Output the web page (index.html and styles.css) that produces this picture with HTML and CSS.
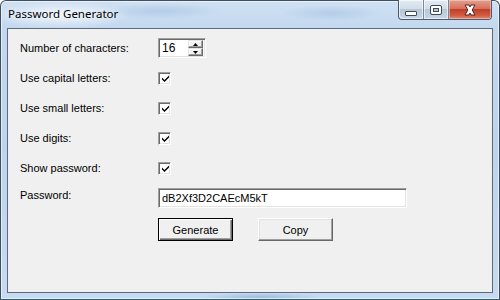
FILE: index.html
```html
<!DOCTYPE html>
<html>
<head>
<meta charset="utf-8">
<link rel="stylesheet" href="styles.css">
</head>
<body>
<div class="window">
  <div class="titlebar">
    <span class="title">Password Generator</span>
    <div class="caption-btns">
      <div class="cbtn cmin"><span class="min-icon"></span></div>
      <div class="cbtn cmax"><span class="max-icon"></span></div>
      <div class="cbtn cclose">
        <svg width="20" height="12" viewBox="0 0 20 12">
          <path d="M5 1 L9 1 L10 3 L11 1 L15 1 L12.2 6 L15 11 L11 11 L10 9 L9 11 L5 11 L7.8 6 Z" fill="#fff" stroke="#5a2020" stroke-width="1" stroke-linejoin="round"/>
        </svg>
      </div>
    </div>
  </div>
  <div class="client">
    <div class="form">
      <span class="label">Number of characters:</span>
      <div class="spinner">
        <span class="spin-val">16</span>
        <div class="spin-btns">
          <div class="spin-btn"><svg width="5" height="3" viewBox="0 0 5 3"><path d="M2.5 0 L5 3 L0 3 Z" fill="#000"/></svg></div>
          <div class="spin-btn"><svg width="5" height="3" viewBox="0 0 5 3"><path d="M0 0 L5 0 L2.5 3 Z" fill="#000"/></svg></div>
        </div>
      </div>

      <span class="label">Use capital letters:</span>
      <div class="check"><svg width="9" height="9" viewBox="0 0 9 9"><path d="M1 3.5 L3.5 6 L8 1.5 L8 3.5 L3.5 8 L1 5.5 Z" fill="#000"/></svg></div>

      <span class="label">Use small letters:</span>
      <div class="check"><svg width="9" height="9" viewBox="0 0 9 9"><path d="M1 3.5 L3.5 6 L8 1.5 L8 3.5 L3.5 8 L1 5.5 Z" fill="#000"/></svg></div>

      <span class="label">Use digits:</span>
      <div class="check"><svg width="9" height="9" viewBox="0 0 9 9"><path d="M1 3.5 L3.5 6 L8 1.5 L8 3.5 L3.5 8 L1 5.5 Z" fill="#000"/></svg></div>

      <span class="label">Show password:</span>
      <div class="check"><svg width="9" height="9" viewBox="0 0 9 9"><path d="M1 3.5 L3.5 6 L8 1.5 L8 3.5 L3.5 8 L1 5.5 Z" fill="#000"/></svg></div>

      <span class="label label-top">Password:</span>
      <div class="textbox">dB2Xf3D2CAEcM5kT</div>

      <div class="buttons">
        <div class="btn btn-default">Generate</div>
        <div class="btn">Copy</div>
      </div>
    </div>
  </div>
</div>
</body>
</html>
```

FILE: styles.css
```css
html, body {
  margin: 0;
  padding: 0;
  width: 500px;
  height: 300px;
  overflow: hidden;
  background: #fff;
}

.window {
  box-sizing: border-box;
  width: 500px;
  height: 300px;
  border: 1px solid #3f4f60;
  border-bottom-color: #2f6070;
  border-radius: 6px 6px 0 0;
  padding: 0 6px 6px 6px;
  display: flex;
  flex-direction: column;
  background:
    radial-gradient(ellipse 70px 14px at 60px 14px, rgba(255,255,255,0.75), rgba(255,255,255,0) 100%),
    radial-gradient(ellipse 60px 8px at 160px 10px, rgba(150,185,220,0.45), rgba(150,185,220,0) 100%),
    radial-gradient(ellipse 50px 8px at 330px 12px, rgba(140,175,215,0.35), rgba(140,175,215,0) 100%),
    radial-gradient(ellipse 60px 4px at 260px 296px, rgba(120,160,200,0.5), rgba(120,160,200,0) 100%),
    linear-gradient(180deg, #cfe0f2 0%, #c2d8ef 10%, #bcd4ee 50%, #c6dbf1 100%);
  box-shadow: inset 0 0 0 1px rgba(255,255,255,0.55);
}

.titlebar {
  height: 27px;
  display: flex;
  align-items: flex-start;
  justify-content: space-between;
  flex-shrink: 0;
}

.title {
  font-family: "Noto Sans", "Open Sans", sans-serif;
  font-size: 11.5px;
  color: #000;
  margin-left: 1px;
  margin-top: 5px;
  line-height: 16px;
  text-shadow: 0 0 6px rgba(255,255,255,0.9);
}

.caption-btns {
  display: flex;
  margin-right: 1px;
  margin-top: -1px;
  height: 19px;
  border: 1px solid #4a5a6c;
  border-top: none;
  border-radius: 0 0 4px 4px;
  overflow: hidden;
}

.cbtn {
  height: 19px;
  display: flex;
  align-items: center;
  justify-content: center;
  box-sizing: border-box;
}

.cmin, .cmax {
  width: 25px;
  background: linear-gradient(180deg, #e4ecf5 0%, #d2dde9 45%, #b8c7d8 50%, #c9d6e4 100%);
  border-right: 1px solid #7a8898;
  box-shadow: inset 0 0 0 1px rgba(255,255,255,0.6);
}

.cmin { border-radius: 0 0 0 4px; }

.cclose {
  width: 42px;
  background: linear-gradient(180deg, #e2a090 0%, #d7705c 45%, #c0402a 50%, #d05a40 80%, #e08a70 100%);
  box-shadow: inset 0 0 0 1px rgba(255,220,210,0.5);
}

.min-icon {
  width: 10px;
  height: 3px;
  margin-top: 7px;
  background: #fff;
  border: 1px solid #3c4a5a;
  border-radius: 1px;
}

.max-icon {
  width: 6px;
  height: 4px;
  border: 2px solid #fff;
  outline: 1px solid #3c4a5a;
  box-shadow: inset 0 0 0 1px #3c4a5a;
  border-radius: 1px;
}

.client {
  flex: 1;
  border: 1px solid #5d6b7a;
  background: #f0f0f0;
  font-family: "Liberation Sans", Arial, sans-serif;
  font-size: 11px;
  color: #000;
}

.form {
  display: grid;
  grid-template-columns: 138px 1fr;
  grid-auto-rows: 30px;
  align-items: center;
  padding: 4px 0 0 12px;
}

.label {
  line-height: 13px;
}

.label-top {
  align-self: start;
  padding-top: 6px;
}

.spinner {
  box-sizing: border-box;
  width: 48px;
  height: 20px;
  display: flex;
  justify-content: space-between;
  align-items: center;
  background: #fff;
  border-top: 1px solid #a0a0a0;
  border-left: 1px solid #a0a0a0;
  border-right: 1px solid #fff;
  border-bottom: 1px solid #fff;
  box-shadow: inset 1px 1px 0 #696969, inset -1px -1px 0 #e3e3e3;
  padding: 2px 2px 2px 3px;
}

.spin-val {
  font-size: 12px;
  line-height: 14px;
}

.spin-btns {
  display: flex;
  flex-direction: column;
  width: 15px;
  height: 16px;
}

.spin-btn {
  flex: 1;
  display: flex;
  align-items: center;
  justify-content: center;
  background: #f0f0f0;
  border-top: 1px solid #e3e3e3;
  border-left: 1px solid #e3e3e3;
  border-right: 1px solid #696969;
  border-bottom: 1px solid #696969;
  box-shadow: inset -1px -1px 0 #a0a0a0, inset 1px 1px 0 #fff;
}

.check {
  box-sizing: border-box;
  width: 13px;
  height: 13px;
  background: #fff;
  border-top: 1px solid #a0a0a0;
  border-left: 1px solid #a0a0a0;
  border-right: 1px solid #fff;
  border-bottom: 1px solid #fff;
  box-shadow: inset 1px 1px 0 #696969, inset -1px -1px 0 #e3e3e3;
  display: flex;
  align-items: center;
  justify-content: center;
}

.check svg {
  margin-left: 1px;
  margin-top: 1px;
}

.textbox {
  box-sizing: border-box;
  width: 249px;
  height: 20px;
  background: #fff;
  border-top: 1px solid #a0a0a0;
  border-left: 1px solid #a0a0a0;
  border-right: 1px solid #fff;
  border-bottom: 1px solid #fff;
  box-shadow: inset 1px 1px 0 #696969, inset -1px -1px 0 #e3e3e3;
  padding: 3px 0 0 3px;
  line-height: 13px;
}

.buttons {
  grid-column: 2;
  align-self: start;
  margin-top: 5px;
  display: flex;
  gap: 25px;
}

.btn {
  box-sizing: border-box;
  width: 75px;
  height: 23px;
  display: flex;
  align-items: center;
  justify-content: center;
  background: #f0f0f0;
  border-top: 1px solid #fff;
  border-left: 1px solid #fff;
  border-right: 1px solid #696969;
  border-bottom: 1px solid #696969;
  box-shadow: inset -1px -1px 0 #a0a0a0, inset 1px 1px 0 #e3e3e3;
  font-size: 11px;
}

.btn-default {
  border: 1px solid #000;
  box-shadow: inset 1px 1px 0 #fff, inset -1px -1px 0 #696969, inset -2px -2px 0 #a0a0a0;
}
```
